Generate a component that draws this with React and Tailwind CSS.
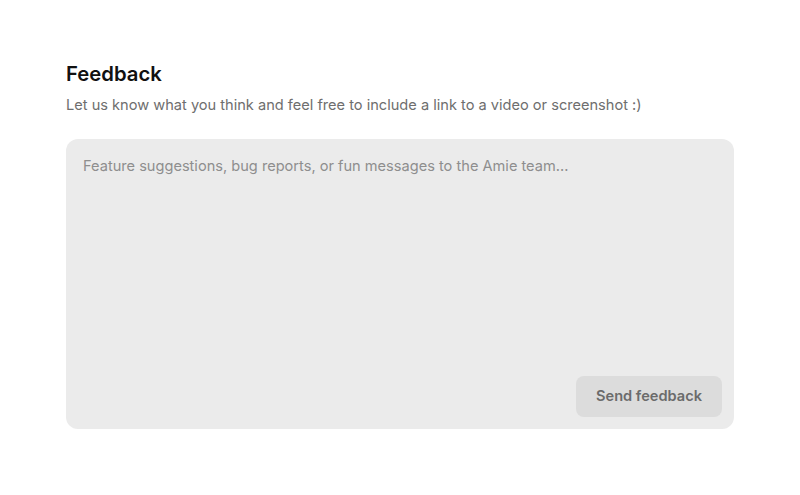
export default function App() {
  return (
    <div className="min-h-screen bg-white" style={{ fontFamily: "Inter, 'Noto Sans', sans-serif" }}>
      <div className="mx-auto w-[668px] pt-[60px]">
        {/* Header */}
        <h1 className="text-[20.3px] font-semibold leading-7 text-[#111111]">Feedback</h1>
        <p className="mt-[7px] text-[14.6px] leading-5 text-[#6e6e6e]">
          Let us know what you think and feel free to include a link to a video or screenshot :)
        </p>

        {/* Message box */}
        <div className="mt-6 flex h-[290px] flex-col rounded-xl bg-[#ebebeb]">
          <textarea
            className="flex-1 resize-none bg-transparent pl-[17px] pr-4 pt-[17px] text-[14.6px] leading-5 text-[#333] placeholder-[#8e8e8e] outline-none"
            placeholder="Feature suggestions, bug reports, or fun messages to the Amie team..."
          />
          <div className="flex justify-end p-3">
            <button className="h-[41px] w-[146px] rounded-lg bg-[#dcdcdc] text-[14.6px] font-semibold text-[#6b6b6b]">
              Send feedback
            </button>
          </div>
        </div>
      </div>
    </div>
  );
}
